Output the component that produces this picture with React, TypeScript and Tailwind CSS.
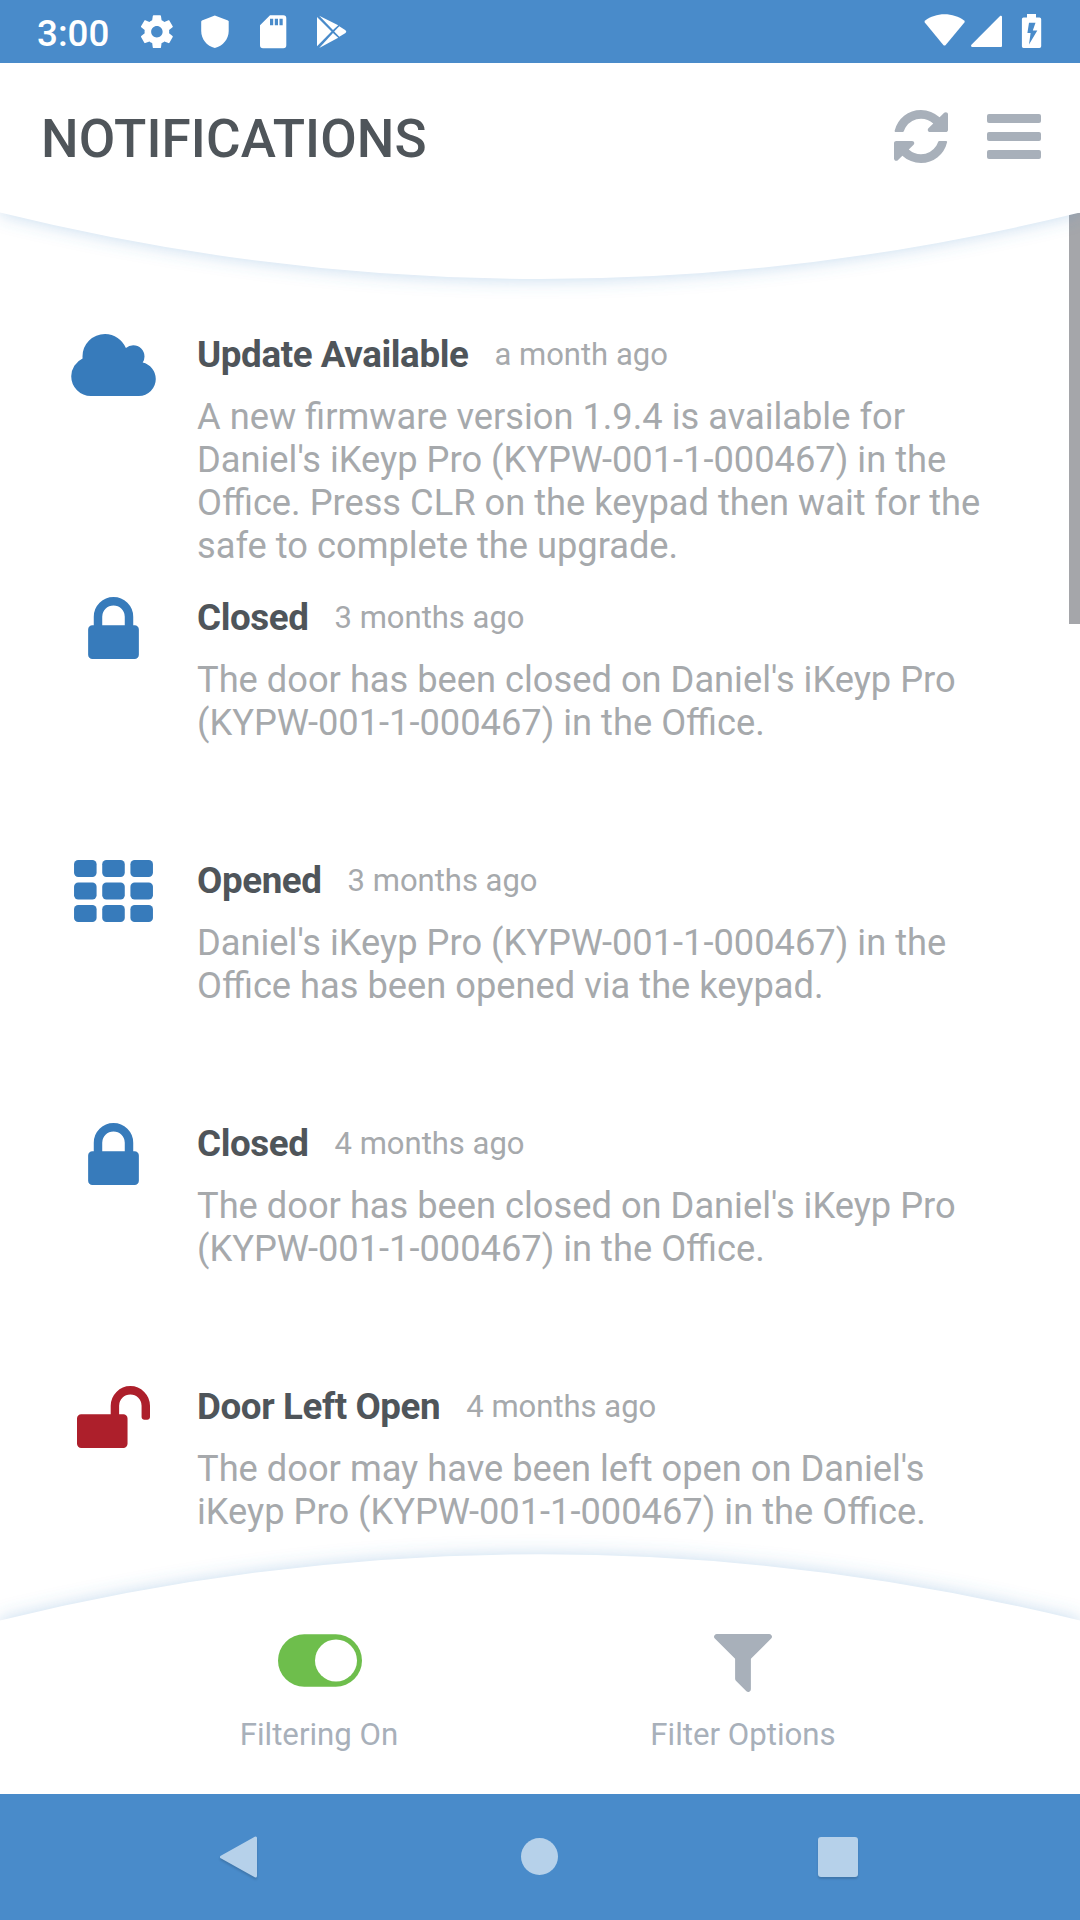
import type { ReactNode } from "react";

type IconName = "cloud" | "lock" | "keypad" | "unlock";

interface Notification {
  id: number;
  icon: IconName;
  title: string;
  time: string;
  lines: string[];
}

const notifications: Notification[] = [
  {
    id: 1,
    icon: "cloud",
    title: "Update Available",
    time: "a month ago",
    lines: [
      "A new firmware version 1.9.4 is available for",
      "Daniel's iKeyp Pro (KYPW-001-1-000467) in the",
      "Office. Press CLR on the keypad then wait for the",
      "safe to complete the upgrade.",
    ],
  },
  {
    id: 2,
    icon: "lock",
    title: "Closed",
    time: "3 months ago",
    lines: [
      "The door has been closed on Daniel's iKeyp Pro",
      "(KYPW-001-1-000467) in the Office.",
    ],
  },
  {
    id: 3,
    icon: "keypad",
    title: "Opened",
    time: "3 months ago",
    lines: [
      "Daniel's iKeyp Pro (KYPW-001-1-000467) in the",
      "Office has been opened via the keypad.",
    ],
  },
  {
    id: 4,
    icon: "lock",
    title: "Closed",
    time: "4 months ago",
    lines: [
      "The door has been closed on Daniel's iKeyp Pro",
      "(KYPW-001-1-000467) in the Office.",
    ],
  },
  {
    id: 5,
    icon: "unlock",
    title: "Door Left Open",
    time: "4 months ago",
    lines: [
      "The door may have been left open on Daniel's",
      "iKeyp Pro (KYPW-001-1-000467) in the Office.",
    ],
  },
];

function NotificationIcon({ name }: { name: IconName }) {
  if (name === "cloud") {
    return (
      <svg viewBox="64 128 1920 1408" className="h-[62px] w-[85px] fill-[#377bbb]">
        <path d="M1984 1152q0 159-112.5 271.5t-271.5 112.5h-1088q-185 0-316.5-131.5t-131.5-316.5q0-132 71-241.5t187-163.5q-2-28-2-43 0-212 150-362t362-150q158 0 286.5 88t187.5 230q70-62 166-62 106 0 181 75t75 181q0 75-41 138 129 30 213 134.5t84 239.5z" />
      </svg>
    );
  }

  if (name === "lock") {
    return (
      <svg viewBox="320 128 1152 1408" className="h-[62px] w-[51px] fill-[#377bbb]">
        <path d="M640 768h512v-192q0-106-75-181t-181-75-181 75-75 181v192zm832 96v576q0 40-28 68t-68 28h-960q-40 0-68-28t-28-68v-576q0-40 28-68t68-28h32v-192q0-184 132-316t316-132 316 132 132 316v192h32q40 0 68 28t28 68z" />
      </svg>
    );
  }

  if (name === "unlock") {
    return (
      <svg viewBox="64 128 1664 1408" className="h-[62px] w-[73px] fill-[#ad1f2b]">
        <path d="M1728 576v256q0 26-19 45t-45 19h-64q-26 0-45-19t-19-45v-256q0-106-75-181t-181-75-181 75-75 181v192h96q40 0 68 28t28 68v576q0 40-28 68t-68 28h-960q-40 0-68-28t-28-68v-576q0-40 28-68t68-28h672v-192q0-185 131.5-316.5t316.5-131.5 316.5 131.5 131.5 316.5z" />
      </svg>
    );
  }

  return (
    <svg viewBox="0 0 1792 1408" className="h-[62px] w-[79px] fill-[#377bbb]">
      {[0, 512, 1024].map((y) =>
        [0, 640, 1280].map((x) => (
          <rect key={`${x}-${y}`} x={x} y={y} width="512" height="384" rx="96" />
        ))
      )}
    </svg>
  );
}

function StatusBar() {
  return (
    <div className="h-[63px] shrink-0 bg-[#498bca] text-white flex items-center justify-between pl-[37px] pr-[33px]">
      <div className="flex items-center">
        <span className="w-[91px] text-[36.75px] leading-none font-medium pt-[5px]">
          3:00
        </span>
        {/* Settings */}
        <svg viewBox="0 0 58 63" className="w-[58px] h-[63px] fill-white">
          <path
            transform="translate(9.2 12) scale(1.64)"
            d="M19.43 12.98c.04-.32.07-.64.07-.98s-.03-.66-.07-.98l2.11-1.65c.19-.15.24-.42.12-.64l-2-3.46c-.12-.22-.39-.3-.61-.22l-2.49 1c-.52-.4-1.08-.73-1.69-.98l-.38-2.65C14.46 2.18 14.25 2 14 2h-4c-.25 0-.46.18-.49.42l-.38 2.65c-.61.25-1.17.59-1.69.98l-2.49-1c-.23-.09-.49 0-.61.22l-2 3.46c-.13.22-.07.49.12.64l2.11 1.65c-.04.32-.07.65-.07.98s.03.66.07.98l-2.11 1.65c-.19.15-.24.42-.12.64l2 3.46c.12.22.39.3.61.22l2.49-1c.52.4 1.08.73 1.69.98l.38 2.65c.03.24.24.42.49.42h4c.25 0 .46-.18.49-.42l.38-2.65c.61-.25 1.17-.59 1.69-.98l2.49 1c.23.09.49 0 .61-.22l2-3.46c.12-.22.07-.49-.12-.64l-2.11-1.65zM12 15.5c-1.93 0-3.5-1.57-3.5-3.5s1.57-3.5 3.5-3.5 3.5 1.57 3.5 3.5-1.57 3.5-3.5 3.5z"
          />
        </svg>
        {/* Shield */}
        <svg viewBox="0 0 58 63" className="w-[58px] h-[63px] fill-white">
          <path d="M28.8 15.5 15.9 20.6 15.2 21.6V31c0 8 5.6 15.2 13.6 17 8-1.8 13.9-9 13.9-17v-9.4l-.7-1z" />
        </svg>
        {/* SD card */}
        <svg viewBox="0 0 58 63" className="w-[58px] h-[63px] fill-white">
          <path
            fillRule="evenodd"
            d="M26 15.2h13.3a3 3 0 0 1 3 3v27a3 3 0 0 1-3 3h-20.3a3 3 0 0 1-3-3v-19.900zM26 18.700v6.600h3.200v-6.600zM30.800 18.700v6.600h3.200v-6.600zM35.500 18.700v6.600h3.200v-6.600z"
          />
        </svg>
        {/* Play Store */}
        <svg viewBox="0 0 58 63" className="w-[58px] h-[63px] fill-white">
          <path d="M15 17v29.200L29.500 31.600z" />
          <path d="M17.200 15.800 31 30l5.200-4.700z" />
          <path d="M17.200 48 36.200 37.800 31 33z" />
          <path d="M37.300 26.200 32.200 31.600l5.100 5.200 6.200-3.800q1.600-1.400 0-2.800z" />
        </svg>
      </div>

      <div className="flex items-center">
        {/* Wifi */}
        <svg viewBox="920 0 50 63" className="w-[50px] h-[63px] fill-white">
          <path d="M944.500 14.200c7.500 0 14.200 2.300 19.600 6.200q1.200 1 .3 2.200L945.700 45q-1.200 1.200-2.400 0L924.800 22.600q-.8-1.200.4-2.200c5.300-3.900 12-6.200 19.300-6.200z" />
        </svg>
        {/* Signal */}
        <svg viewBox="970 0 40 63" className="w-[40px] h-[63px] fill-white">
          <path d="M1000.300 15.800q1.700-.4 1.700 1.200V46q0 1-1 1H972q-1.600-.2-.8-1.900z" />
        </svg>
        {/* Battery */}
        <svg viewBox="1010 0 37 63" className="w-[37px] h-[63px] fill-white">
          <path
            fillRule="evenodd"
            d="M1027 14h9v3.600h3.500q1.700 0 1.700 1.700v27q0 1.700-1.700 1.700h-16q-1.600 0-1.600-1.700v-27q0-1.700 1.600-1.700h3.500zM1029 22.800l-1.600 10.200h3.200l-1.600 11.500 8.300-14h-4.500l2.700-7.700z"
          />
        </svg>
      </div>
    </div>
  );
}

function Header() {
  return (
    <header className="relative z-10 h-[150px] shrink-0 bg-white flex justify-between pl-[41px] pr-[39px]">
      <h1 className="pt-[45px] text-[53px] leading-[62px] font-medium tracking-[0.1px] text-[#4f555a]">
        NOTIFICATIONS
      </h1>
      <div className="flex items-start gap-[39px] pt-[47px]">
        <button aria-label="Refresh">
          <svg
            viewBox="128 128 1536 1536"
            preserveAspectRatio="none"
            className="w-[54px] h-[53px] fill-[#a8b0ba]"
          >
            <path d="M1639 1056q0 5-1 7-64 268-268 434.500t-478 166.500q-146 0-282.500-55t-243.500-157l-129 129q-19 19-45 19t-45-19-19-45v-448q0-26 19-45t45-19h448q26 0 45 19t19 45-19 45l-137 137q71 66 161 102t187 36q134 0 250-65t186-179q11-17 53-117 8-23 30-23h192q13 0 22.500 9.500t9.500 22.500zm25-800v448q0 26-19 45t-45 19h-448q-26 0-45-19t-19-45 19-45l138-138q-148-137-349-137-134 0-250 65t-186 179q-11 17-53 117-8 23-30 23h-199q-13 0-22.500-9.500t-9.500-22.500v-7q65-268 270-434.500t480-166.500q146 0 284 55.500t245 156.500l130-129q19-19 45-19t45 19 19 45z" />
          </svg>
        </button>
        <button aria-label="Menu" className="flex flex-col gap-[9px] pt-1">
          <span className="block w-[54px] h-[9px] rounded-[2px] bg-[#a8b0ba]" />
          <span className="block w-[54px] h-[9px] rounded-[2px] bg-[#a8b0ba]" />
          <span className="block w-[54px] h-[9px] rounded-[2px] bg-[#a8b0ba]" />
        </button>
      </div>

      {/* Curved lower edge, hangs over the list */}
      <svg
        viewBox="0 0 1080 110"
        className="absolute left-0 top-[149px] w-[1080px] h-[110px] pointer-events-none"
      >
        <defs>
          <filter id="headerShadow" x="-5%" y="-60%" width="110%" height="220%">
            <feGaussianBlur stdDeviation="9" />
          </filter>
        </defs>
        <path
          d="M0 -60V1Q540 134 1080 1V-60z"
          fill="#498bca"
          fillOpacity="0.3"
          filter="url(#headerShadow)"
        />
        <path d="M0 0V.5Q540 133.500 1080 .5V0z" fill="#fff" />
      </svg>
    </header>
  );
}

function NotificationRow({ item }: { item: Notification }) {
  return (
    <li className="h-[263px] flex">
      <div className="w-[197px] shrink-0 flex justify-center pl-[30px] pt-[3px]">
        <NotificationIcon name={item.icon} />
      </div>
      <div className="min-w-0 text-[#a6a9ac]">
        <div className="flex items-start gap-[26px] h-16 leading-[48px] whitespace-nowrap">
          <h2 className="text-[36.75px] font-bold tracking-[-0.4px] text-[#4f555a]">
            {item.title}
          </h2>
          <span className="text-[31px]">{item.time}</span>
        </div>
        <p className="text-[36.25px] leading-[43px] whitespace-nowrap">
          {item.lines.map((line) => (
            <span key={line} className="block">
              {line}
            </span>
          ))}
        </p>
      </div>
    </li>
  );
}

function FooterItem({ label, children }: { label: string; children: ReactNode }) {
  return (
    <button className="flex flex-col items-center w-[424px] text-[31.2px] leading-[38px] text-[#a8b0ba]">
      <span className="h-[82px] flex items-start">{children}</span>
      {label}
    </button>
  );
}

function Footer() {
  return (
    <footer className="relative z-10 h-[174px] shrink-0 bg-white flex justify-center pt-[14px]">
      {/* Curved upper edge */}
      <svg
        viewBox="0 0 1080 110"
        className="absolute left-0 -top-[109px] w-[1080px] h-[110px] pointer-events-none"
      >
        <defs>
          <filter id="footerShadow" x="-5%" y="-60%" width="110%" height="220%">
            <feGaussianBlur stdDeviation="9" />
          </filter>
        </defs>
        <path
          d="M0 170V109Q540 -23 1080 109V170z"
          fill="#498bca"
          fillOpacity="0.3"
          filter="url(#footerShadow)"
        />
        <path d="M0 110V109.500Q540 -23 1080 109.500V110z" fill="#fff" />
      </svg>

      <div className="relative flex -ml-[18px]">
        <FooterItem label="Filtering On">
          <svg viewBox="0 0 84 53" className="w-[84px] h-[53px] ml-0.5">
            <rect y=".3" width="84" height="52.500" rx="26.250" fill="#6ebe4c" />
            <circle cx="58" cy="26.500" r="21" fill="#fff" />
          </svg>
        </FooterItem>
        <FooterItem label="Filter Options">
          <svg viewBox="191 256 1410 1408" className="w-[58px] h-[58px] fill-[#a8b0ba]">
            <path d="M1595 295q17 41-14 70l-493 493v742q0 42-39 59-13 5-25 5-27 0-45-19l-256-256q-19-19-19-45v-486l-493-493q-31-29-14-70 17-39 59-39h1280q42 0 59 39z" />
          </svg>
        </FooterItem>
      </div>
    </footer>
  );
}

function NavigationBar() {
  return (
    <nav className="h-[126px] shrink-0 bg-[#498bca] flex items-center justify-between px-[214px]">
      <svg viewBox="0 0 50 50" className="w-[50px] h-[50px] drop-shadow-[0_2px_1px_rgba(0,0,0,0.15)]">
        <path
          d="M41.500 6v38L7.500 25z"
          fill="#b6d1ea"
          stroke="#b6d1ea"
          strokeWidth="3"
          strokeLinejoin="round"
        />
      </svg>
      <span className="ml-1 mb-px w-[37px] h-[37px] rounded-full bg-[#b6d1ea]" />
      <span className="mx-[8px] w-10 h-10 rounded-[3px] bg-[#b6d1ea] shadow-[0_2px_2px_rgba(0,0,0,0.15)]" />
    </nav>
  );
}

export default function App() {
  return (
    <div className="w-[1080px] h-[1920px] flex flex-col overflow-hidden bg-white font-['Roboto',sans-serif]">
      <StatusBar />
      <Header />
      <main className="relative flex-1 min-h-0 overflow-hidden pt-[118px]">
        <ul>
          {notifications.map((item) => (
            <NotificationRow key={item.id} item={item} />
          ))}
        </ul>
        {/* Scroll indicator */}
        <div className="absolute right-0 top-0 w-[11px] h-[411px] bg-[#a5a6aa]" />
      </main>
      <Footer />
      <NavigationBar />
    </div>
  );
}
